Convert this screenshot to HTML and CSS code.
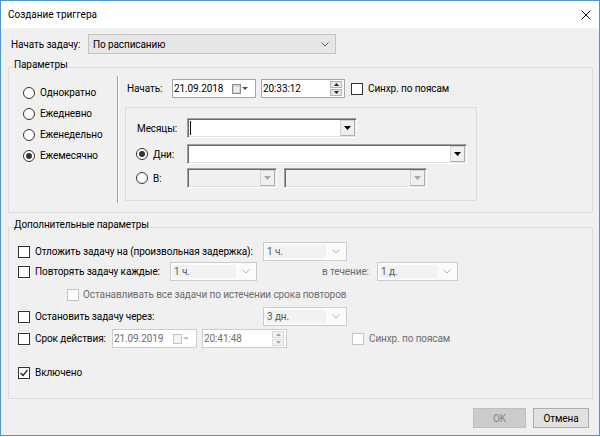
FILE: index.html
```html
<!DOCTYPE html>
<html lang="ru">
<head>
<meta charset="utf-8">
<title>Создание триггера</title>
<link rel="stylesheet" href="styles.css">
</head>
<body>
<div class="window">
  <div class="titlebar">
    <span class="title">Создание триггера</span>
    <svg class="close" width="10" height="10" viewBox="0 0 10 10"><path d="M0.5 0.5L9.5 9.5M9.5 0.5L0.5 9.5" stroke="#111" stroke-width="1" fill="none"/></svg>
  </div>
  <div class="content">
    <div class="row-start">
      <span class="lbl-start">Начать задачу:</span>
      <div class="fcombo">
        <span class="fcombo-text">По расписанию</span>
        <svg class="chev" width="8" height="5" viewBox="0 0 8 5"><path d="M0.5 0.5L4 4L7.5 0.5" fill="none" stroke="#606060"/></svg>
      </div>
    </div>

    <div class="group group-params">
      <span class="legend">Параметры</span>
      <div class="freq">
        <div class="radio-row"><span class="radio"></span><span>Однократно</span></div>
        <div class="radio-row"><span class="radio"></span><span>Ежедневно</span></div>
        <div class="radio-row"><span class="radio"></span><span>Еженедельно</span></div>
        <div class="radio-row"><span class="radio on"></span><span>Ежемесячно</span></div>
      </div>
      <div class="sep"></div>
      <div class="sched">
        <div class="start-row">
          <span class="lbl-nachat">Начать:</span>
          <div class="date">
            <span class="date-text">21.09.2018</span>
            <svg class="cal" width="16" height="10" viewBox="0 0 16 10"><rect x="0.5" y="0.5" width="8" height="9" fill="#d4d4d4" stroke="#8c8c8c"/><rect x="2" y="3" width="5" height="5" fill="#eeeeee"/><path d="M10 3H16L13 6Z" fill="#3d4f70"/></svg>
          </div>
          <div class="time">
            <span class="date-text">20:33:12</span>
            <div class="spin">
              <span class="spin-btn"><svg width="5" height="3" viewBox="0 0 5 3"><path d="M0 3H5L2.5 0Z" fill="#222"/></svg></span>
              <span class="spin-btn"><svg width="5" height="3" viewBox="0 0 5 3"><path d="M0 0H5L2.5 3Z" fill="#222"/></svg></span>
            </div>
          </div>
          <span class="check"></span>
          <span class="cb-text">Синхр. по поясам</span>
        </div>

        <div class="monthly">
          <div class="m-row">
            <span class="m-label m-label-months">Месяцы:</span>
            <div class="in3d in-months">
              <span class="caret"></span>
              <span class="dd3d"><svg width="7" height="4" viewBox="0 0 7 4"><path d="M0 0H7L3.5 4Z" fill="#000"/></svg></span>
            </div>
          </div>
          <div class="m-row m-row-days">
            <span class="radio on"></span><span class="m-label m-label-r">Дни:</span>
            <div class="in3d in-days">
              <span class="dd3d"><svg width="7" height="4" viewBox="0 0 7 4"><path d="M0 0H7L3.5 4Z" fill="#000"/></svg></span>
            </div>
          </div>
          <div class="m-row m-row-at">
            <span class="radio"></span><span class="m-label m-label-r">В:</span>
            <div class="in3d in3d-off in-at1">
              <span class="dd3d"><svg width="7" height="4" viewBox="0 0 7 4"><path d="M0 0H7L3.5 4Z" fill="#a8a8a8"/></svg></span>
            </div>
            <div class="in3d in3d-off in-at2">
              <span class="dd3d"><svg width="7" height="4" viewBox="0 0 7 4"><path d="M0 0H7L3.5 4Z" fill="#a8a8a8"/></svg></span>
            </div>
          </div>
        </div>
      </div>
    </div>

    <div class="group group-extra">
      <span class="legend">Дополнительные параметры</span>
      <div class="x-row">
        <div class="chk chk-wide"><span class="check"></span><span>Отложить задачу на (произвольная задержка):</span></div>
        <div class="dcombo dcombo-84"><span class="dcombo-text">1 ч.</span><svg class="chev" width="8" height="5" viewBox="0 0 8 5"><path d="M0.5 0.5L4 4L7.5 0.5" fill="none" stroke="#b0b0b0"/></svg></div>
      </div>
      <div class="x-row x-row-repeat">
        <div class="chk chk-repeat"><span class="check"></span><span>Повторять задачу каждые:</span></div>
        <div class="dcombo dcombo-87"><span class="dcombo-text">1 ч.</span><svg class="chev" width="8" height="5" viewBox="0 0 8 5"><path d="M0.5 0.5L4 4L7.5 0.5" fill="none" stroke="#b0b0b0"/></svg></div>
        <span class="muted during">в течение:</span>
        <div class="dcombo dcombo-81"><span class="dcombo-text">1 д.</span><svg class="chev" width="8" height="5" viewBox="0 0 8 5"><path d="M0.5 0.5L4 4L7.5 0.5" fill="none" stroke="#b0b0b0"/></svg></div>
      </div>
      <div class="x-row x-row-stopall">
        <span class="check check-off"></span><span class="muted">Останавливать все задачи по истечении срока повторов</span>
      </div>
      <div class="x-row x-row-stop">
        <div class="chk chk-wide"><span class="check"></span><span>Остановить задачу через:</span></div>
        <div class="dcombo dcombo-84"><span class="dcombo-text">3 дн.</span><svg class="chev" width="8" height="5" viewBox="0 0 8 5"><path d="M0.5 0.5L4 4L7.5 0.5" fill="none" stroke="#b0b0b0"/></svg></div>
      </div>
      <div class="x-row x-row-expire">
        <div class="chk chk-expire"><span class="check"></span><span>Срок действия:</span></div>
        <div class="date date-off">
          <span class="date-text">21.09.2019</span>
          <svg class="cal" width="16" height="10" viewBox="0 0 16 10"><rect x="0.5" y="0.5" width="8" height="9" fill="#f4f4f4" stroke="#c4c4c4"/><path d="M10 3H16L13 6Z" fill="#c0c0c0"/></svg>
        </div>
        <div class="time time-off">
          <span class="date-text">20:41:48</span>
          <div class="spin spin-off">
            <span class="spin-btn"><svg width="5" height="3" viewBox="0 0 5 3"><path d="M0 3H5L2.5 0Z" fill="#a8a8a8"/></svg></span>
            <span class="spin-btn"><svg width="5" height="3" viewBox="0 0 5 3"><path d="M0 0H5L2.5 3Z" fill="#a8a8a8"/></svg></span>
          </div>
        </div>
        <span class="check check-off check-sync2"></span>
        <span class="cb-text muted">Синхр. по поясам</span>
      </div>
      <div class="x-row x-row-enabled">
        <div class="chk"><span class="check checked"><svg width="10" height="10" viewBox="0 0 10 10"><path d="M1.5 5L4 7.5L8.5 2" fill="none" stroke="#222" stroke-width="1.2"/></svg></span><span>Включено</span></div>
      </div>
    </div>

    <div class="buttons">
      <span class="btn btn-off">OK</span>
      <span class="btn btn-cancel">Отмена</span>
    </div>
  </div>
</div>
</body>
</html>
```

FILE: styles.css
```css
* { box-sizing: border-box; }
html, body { margin: 0; padding: 0; }
body {
  width: 600px;
  height: 437px;
  background: #ffffff;
  font-family: Roboto, "Noto Sans", sans-serif;
  font-size: 10px;
  letter-spacing: -0.1px;
  color: #000;
  overflow: hidden;
  white-space: nowrap;
}
.window {
  width: 600px;
  height: 436px;
  border: 1px solid #4f95d4;
  display: flex;
  flex-direction: column;
}
.titlebar {
  height: 27px;
  flex: none;
  background: #fff;
  display: flex;
  align-items: center;
  padding: 0 8px 0 7px;
  font-size: 10px;
  letter-spacing: 0;
}
.close { margin-left: auto; }
.content {
  flex: 1;
  background: #f0f0f0;
  padding: 6px 6px 0 7px;
  display: flex;
  flex-direction: column;
}

/* top row */
.row-start { display: flex; align-items: center; height: 20px; }
.lbl-start { margin-left: 3px; width: 77px; }
.fcombo {
  width: 248px; height: 20px;
  border: 1px solid #c4c4c4;
  background: #e5e5e5;
  display: flex; align-items: center;
  padding: 0 6px 0 4px;
}
.fcombo-text { flex: 1; }
.chev { flex: none; }

/* group boxes */
.group { position: relative; border: 1px solid #dcdcdc; flex: none; }
.legend {
  position: absolute; top: -11px; left: 4px;
  padding: 0 1px; background: #f0f0f0; line-height: 16px;
}
.group-params { margin-top: 13px; height: 146px; display: flex; }
.freq { width: 108px; padding: 14px 0 0 14px; display: flex; flex-direction: column; }
.radio-row { display: flex; align-items: center; height: 21px; }
.radio {
  width: 12px; height: 12px; flex: none;
  border: 1px solid #333; border-radius: 50%; background: #fff;
  margin-right: 5px;
  display: flex; align-items: center; justify-content: center;
}
.radio.on::after { content: ""; width: 6px; height: 6px; border-radius: 50%; background: #333; }
.sep { width: 2px; height: 127px; margin-top: 8px; border-left: 1px solid #a0a0a0; border-right: 1px solid #fff; }
.sched { padding: 11px 0 0 6px; }
.start-row { display: flex; align-items: center; height: 19px; padding-left: 2px; }
.lbl-nachat { width: 45px; }
.date, .time {
  width: 84px; height: 19px;
  border: 1px solid #a6a6a6; background: #fff;
  display: flex; align-items: center;
  padding: 0 1px 0 1px;
}
.time { margin-left: 5px; }
.date-text { flex: 1; }
.cal { margin-right: 6px; flex: none; }
.spin { display: flex; flex-direction: column; gap: 1px; margin-right: 1px; }
.spin-btn {
  width: 12px; height: 7px;
  background: #e6e6e6; border: 1px solid #b4b4b4;
  display: flex; align-items: center; justify-content: center;
}
.check {
  width: 12px; height: 12px; flex: none;
  border: 1px solid #333; background: #fff;
  display: flex; align-items: center; justify-content: center;
}
.start-row .check { margin-left: 6px; }
.cb-text { margin-left: 5px; }

/* monthly */
.monthly {
  margin-top: 9px; width: 352px; height: 94px;
  border: 1px solid #dcdcdc;
  padding: 10px 0 0 10px;
}
.m-row { display: flex; align-items: center; height: 20px; }
.m-row-days { margin-top: 6px; }
.m-row-at { margin-top: 4px; }
.m-label-months { width: 51px; padding-left: 1px; }
.m-label-r { width: 34px; }
.in3d {
  height: 20px; background: #fff;
  border-top: 1px solid #a0a0a0; border-left: 1px solid #a0a0a0;
  border-right: 1px solid #fff; border-bottom: 1px solid #fff;
  box-shadow: inset 1px 1px 0 #696969, inset -1px -1px 0 #e3e3e3;
  display: flex; align-items: center; justify-content: flex-end;
  padding: 1px 1px 1px 2px;
}
.in3d-off { background: #f0f0f0; }
.in-months { width: 170px; }
.in-days { width: 280px; }
.in-at1 { width: 90px; }
.in-at2 { width: 143px; margin-left: 7px; }
.caret { width: 1px; height: 14px; background: #000; margin-right: auto; margin-left: 0; }
.dd3d {
  width: 15px; height: 16px;
  background: #f0f0f0;
  border: 1px solid #d4d4d4;
  border-right-color: #b0b0b0; border-bottom-color: #b0b0b0;
  display: flex; align-items: center; justify-content: center;
}

/* extra */
.group-extra { margin-top: 14px; height: 172px; padding: 14px 0 0 9px; }
.x-row { display: flex; align-items: center; height: 19px; }
.x-row-repeat { margin-top: 1px; }
.x-row-stopall { margin-top: 4px; padding-left: 49px; }
.x-row-stop { margin-top: 3px; }
.x-row-expire { margin-top: 3px; }
.x-row-enabled { margin-top: 15px; }
.chk { display: flex; align-items: center; }
.chk .check { margin-right: 5px; }
.chk-wide { width: 245px; }
.chk-repeat { width: 152px; }
.chk-expire { width: 94px; }
.check-off { border-color: #c4c4c4; margin-right: 4px; }
.check-sync2 { margin-left: 65px; margin-right: 0; }
.muted { color: #6d6d6d; }
.during { margin-left: 65px; width: 55px; }
.dcombo {
  height: 19px;
  border: 1px solid #cccccc; background: #fbfbfb;
  display: flex; align-items: center;
  padding: 2px 6px 2px 2px;
}
.dcombo-text {
  flex: 1; height: 13px; line-height: 13px;
  background: #f2f2f2; color: #5a5a5a;
  padding-left: 1px; margin-right: 6px;
}
.dcombo-84 { width: 84px; }
.dcombo-87 { width: 87px; }
.dcombo-81 { width: 81px; }
.date-off, .time-off { border-color: #cccccc; color: #6d6d6d; width: 85px; }
.time-off { margin-left: 5px; }
.spin-off .spin-btn { background: #f4f4f4; border-color: #d8d8d8; }

/* buttons */
.buttons { display: flex; justify-content: flex-end; gap: 7px; margin-top: 9px; padding-right: 4px; }
.btn {
  height: 20px;
  display: flex; align-items: center; justify-content: center;
  border: 1px solid #adadad; background: #e1e1e1;
}
.btn-off { width: 53px; background: #cccccc; border-color: #bfbfbf; color: #838383; }
.btn-cancel { width: 56px; }
```
